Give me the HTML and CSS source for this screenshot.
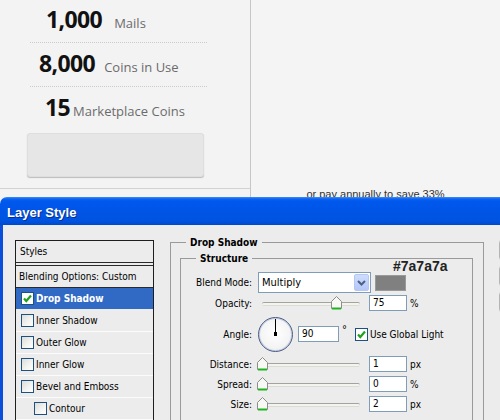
FILE: index.html
```html
<!DOCTYPE html>
<html>
<head>
<meta charset="utf-8">
<link rel="stylesheet" href="styles.css">
</head>
<body>
<div class="top">
  <div class="stats-panel">
    <div class="stats-box">
      <div class="stats">
        <div class="stat stat-mails"><span class="num">1,000</span><span class="lbl">Mails</span></div>
        <div class="stat stat-coins"><span class="num">8,000</span><span class="lbl">Coins in Use</span></div>
        <div class="stat stat-market"><span class="num">15</span><span class="lbl">Marketplace Coins</span></div>
      </div>
      <div class="cta"></div>
    </div>
  </div>
  <div class="pricing"><p class="annual">or pay annually to save 33%</p></div>
</div>

<div class="dialog">
  <div class="titlebar">Layer Style</div>
  <div class="dlg-body">
    <div class="styles-list">
      <div class="styles-head">Styles</div>
      <div class="blend-opts">Blending Options: Custom</div>
      <div class="style-item selected"><span class="cb checked"><svg width="11" height="11" viewBox="0 0 11 11"><path d="M2 5.5 L4.3 8 L9 2.5" fill="none" stroke="#21a121" stroke-width="2.2"/></svg></span>Drop Shadow</div>
      <div class="style-item"><span class="cb"></span>Inner Shadow</div>
      <div class="style-item"><span class="cb"></span>Outer Glow</div>
      <div class="style-item"><span class="cb"></span>Inner Glow</div>
      <div class="style-item"><span class="cb"></span>Bevel and Emboss</div>
      <div class="style-item sub"><span class="cb"></span>Contour</div>
    </div>

    <fieldset class="group outer">
      <legend>Drop Shadow</legend>
      <fieldset class="group inner">
        <legend>Structure</legend>

        <div class="row row-blend">
          <span class="label">Blend Mode:</span>
          <div class="select"><span class="select-text">Multiply</span><span class="select-btn"><svg width="9" height="6" viewBox="0 0 9 6"><path d="M1 1 L4.5 4.5 L8 1" fill="none" stroke="#4d6185" stroke-width="2"/></svg></span></div>
          <div class="swatch"><span class="hex">#7a7a7a</span></div>
        </div>

        <div class="row row-opacity">
          <span class="label">Opacity:</span>
          <div class="slider"><span class="track"></span><span class="thumb" style="left: 75%"><svg width="11" height="14" viewBox="0 0 11 14"><path d="M0.5 5.5 L5.5 0.5 L10.5 5.5 V12.5 H0.5 Z" fill="#f8f8f5" stroke="#8c8c8c"/><path d="M1 12.5 H10" stroke="#1fb51f" stroke-width="2"/></svg></span></div>
          <span class="field">75</span><span class="unit">%</span>
        </div>

        <div class="row row-angle">
          <span class="label">Angle:</span>
          <div class="dial"><span class="needle"></span><span class="hub"></span></div>
          <span class="field field-angle">90</span><span class="deg">°</span>
          <span class="cb checked global"><svg width="11" height="11" viewBox="0 0 11 11"><path d="M2 5.5 L4.3 8 L9 2.5" fill="none" stroke="#21a121" stroke-width="2.2"/></svg></span><span class="cb-text">Use Global Light</span>
        </div>

        <div class="row row-small">
          <span class="label">Distance:</span>
          <div class="slider"><span class="track"></span><span class="thumb" style="left: 0%"><svg width="11" height="14" viewBox="0 0 11 14"><path d="M0.5 5.5 L5.5 0.5 L10.5 5.5 V12.5 H0.5 Z" fill="#f8f8f5" stroke="#8c8c8c"/><path d="M1 12.5 H10" stroke="#1fb51f" stroke-width="2"/></svg></span></div>
          <span class="field">1</span><span class="unit">px</span>
        </div>

        <div class="row row-small">
          <span class="label">Spread:</span>
          <div class="slider"><span class="track"></span><span class="thumb" style="left: 0%"><svg width="11" height="14" viewBox="0 0 11 14"><path d="M0.5 5.5 L5.5 0.5 L10.5 5.5 V12.5 H0.5 Z" fill="#f8f8f5" stroke="#8c8c8c"/><path d="M1 12.5 H10" stroke="#1fb51f" stroke-width="2"/></svg></span></div>
          <span class="field">0</span><span class="unit">%</span>
        </div>

        <div class="row row-small">
          <span class="label">Size:</span>
          <div class="slider"><span class="track"></span><span class="thumb" style="left: 0%"><svg width="11" height="14" viewBox="0 0 11 14"><path d="M0.5 5.5 L5.5 0.5 L10.5 5.5 V12.5 H0.5 Z" fill="#f8f8f5" stroke="#8c8c8c"/><path d="M1 12.5 H10" stroke="#1fb51f" stroke-width="2"/></svg></span></div>
          <span class="field">2</span><span class="unit">px</span>
        </div>
      </fieldset>
    </fieldset>

    <div class="side-buttons">
      <span class="xp-btn"></span>
      <span class="xp-btn"></span>
      <span class="xp-btn"></span>
    </div>
  </div>
</div>
</body>
</html>
```

FILE: styles.css
```css
* { box-sizing: border-box; }

html, body {
  margin: 0;
  padding: 0;
}

body {
  width: 500px;
  height: 420px;
  overflow: hidden;
  background: #f3f3f3;
}

/* ---------- top web page ---------- */
.top {
  display: flex;
  height: 197px;
  overflow: hidden;
  background: #f3f3f3;
}

.stats-panel {
  width: 251px;
  height: 197px;
  border-right: 1px solid #c6c6c6;
  flex: none;
}

.stats-box {
  height: 189px;
  border-bottom: 1px solid #d2d2d2;
}

.stats {
  margin-left: 30px;
  width: 177px;
}

.stat {
  display: flex;
  align-items: baseline;
  height: 44px;
  padding-top: 9px;
  border-bottom: 1px dotted #cccccc;
  font-family: "Open Sans", sans-serif;
}

.stat-mails { height: 43px; padding-top: 8px; padding-left: 16px; }
.stat-coins { padding-left: 9px; }
.stat-market { padding-left: 15px; border-bottom: none; height: 45px; }

.num {
  font-size: 23px;
  font-weight: 700;
  line-height: 23px;
  color: #111;
  letter-spacing: -0.6px;
}

.lbl {
  font-size: 13px;
  color: #6b6b6b;
}

.stat-mails .lbl { margin-left: 12px; }
.stat-coins .lbl { margin-left: 9px; }
.stat-market .lbl { margin-left: 3px; }

.cta {
  margin: 1px 0 0 27px;
  width: 177px;
  height: 44px;
  background: #e6e6e6;
  border: 1px solid #dedede;
  border-radius: 3px;
  box-shadow: 0 1px 1px #bcbcbc;
}

.pricing {
  flex: 1;
  padding-top: 188px;
  background: #f4f4f4;
}

.annual {
  margin: 0;
  text-align: center;
  font-family: "Liberation Sans", Arial, sans-serif;
  font-size: 11px;
  line-height: 13px;
  color: #333;
}

/* ---------- XP dialog ---------- */
.dialog {
  height: 223px;
  font-family: "DejaVu Sans Condensed", "DejaVu Sans", sans-serif;
  font-stretch: condensed;
  font-size: 10px;
  color: #000;
}

.titlebar {
  height: 28px;
  padding: 3px 0 0 7px;
  line-height: 25px;
  border-radius: 7px 0 0 0;
  background: linear-gradient(#3a8cfb 0, #0d62ee 2px, #0058ee 4px, #0055e6 50%, #0053e0 85%, #0048cc 100%);
  color: #fff;
  font-family: "Liberation Sans", Arial, sans-serif;
  font-stretch: normal;
  font-weight: 700;
  font-size: 13px;
  text-shadow: 1px 1px 0 #0a2f8f;
}

.dlg-body {
  display: flex;
  align-items: flex-start;
  height: 195px;
  overflow: hidden;
  padding: 15px 0 0 12px;
  background: #ececec;
  border-left: 3px solid #0a4fdc;
}

/* styles list */
.styles-list {
  flex: none;
  width: 139px;
  height: 200px;
  border: 1px solid #1e1e1e;
  border-bottom: none;
  background: #ececec;
}

.styles-head {
  height: 22px;
  padding-left: 4px;
  line-height: 21px;
  border-bottom: 1px solid #2a2a2a;
  margin-bottom: 2px;
}

.blend-opts {
  height: 23px;
  padding-left: 3px;
  line-height: 21px;
  border-top: 1px solid #2a2a2a;
  border-bottom: 1px solid #2a2a2a;
}

.style-item {
  display: flex;
  align-items: center;
  gap: 2px;
  height: 22px;
  padding-left: 5px;
  border-bottom: 1px solid #fbfbfb;
}

.style-item.selected {
  background: #316ac5;
  color: #fff;
  font-weight: 700;
  border-bottom-color: #ececec;
}

.style-item.sub { padding-left: 18px; }

.cb {
  display: inline-flex;
  align-items: center;
  justify-content: center;
  width: 13px;
  height: 13px;
  flex: none;
  border: 1px solid #1c5180;
  background: linear-gradient(135deg, #dcdcd7 0%, #f4f4f2 60%, #ffffff 100%);
}

.cb.checked { background: #fff; }

/* fieldsets */
.group {
  margin: 0;
  border: 1px solid #9a9a9a;
  min-width: 0;
}

.group legend {
  font-weight: 700;
  line-height: 13px;
  padding: 0 4px;
}

.outer {
  flex: none;
  width: 314px;
  height: 220px;
  margin: -4px 0 0 16px;
  padding: 0 10px 0 9px;
}

.outer > legend { margin-left: 6px; }

.inner {
  width: 293px;
  height: 200px;
  margin-top: 3px;
  padding: 0;
}

.inner > legend { margin-left: 15px; }

.row {
  display: flex;
  align-items: center;
  position: relative;
}

.label {
  width: 71px;
  flex: none;
  text-align: right;
  margin-right: 6px;
}

.row-blend { height: 21px; margin-top: 7px; }
.row-opacity { height: 16px; margin-top: 2px; }
.row-angle { height: 36px; margin-top: 5px; }
.row-small { height: 16px; margin-top: 4px; }

.select {
  display: flex;
  align-items: center;
  width: 113px;
  height: 21px;
  padding: 2px 1px 2px 3px;
  background: #fff;
  border: 1px solid #7f9db9;
}

.select-text {
  flex: 1;
  font-size: 11px;
}

.select-btn {
  display: flex;
  align-items: center;
  justify-content: center;
  width: 15px;
  height: 17px;
  border: 1px solid #b4c8f6;
  border-radius: 2px;
  background: linear-gradient(#cfdcfc, #b4c7f8);
}

.swatch {
  position: relative;
  margin-left: 4px;
  width: 31px;
  height: 16px;
  background: #808080;
  border: 1px solid #9a9a9a;
}

.hex {
  position: absolute;
  left: 17px;
  top: -18px;
  font-family: "Liberation Sans", Arial, sans-serif;
  font-stretch: normal;
  font-weight: 700;
  font-size: 14px;
  line-height: 16px;
  color: #222;
  white-space: nowrap;
}

.slider {
  position: relative;
  width: 98px;
  height: 16px;
  margin-left: 4px;
  margin-right: 9px;
}

.track {
  position: absolute;
  left: 0;
  right: 0;
  top: 7px;
  height: 4px;
  border-radius: 2px;
  background: #f4f4ef;
  border-top: 1px solid #a3a3a0;
  border-bottom: 1px solid #dcdcd5;
}

.thumb {
  position: absolute;
  top: 1px;
  margin-left: -5px;
  width: 11px;
  height: 14px;
  line-height: 0;
}

.field {
  width: 38px;
  height: 16px;
  padding-left: 3px;
  line-height: 14px;
  background: #fff;
  border: 1px solid #7f9db9;
  flex: none;
}

.unit {
  margin-left: 3px;
}

.dial {
  position: relative;
  width: 35px;
  height: 35px;
  flex: none;
  border-radius: 50%;
  border: 1.5px solid #4a5b85;
  background: radial-gradient(circle at 50% 45%, #ffffff 0%, #f4f4f4 60%, #e2e2e2 100%);
  box-shadow: inset 0 0 0 1px #c3cce0;
  margin-right: 5px;
}

.needle {
  position: absolute;
  left: 15.5px;
  top: 1px;
  width: 1.5px;
  height: 15px;
  background: #000;
}

.hub {
  position: absolute;
  left: 14.5px;
  top: 14.5px;
  width: 3.5px;
  height: 3.5px;
  background: #000;
}

.field-angle { width: 41px; }

.deg {
  align-self: flex-start;
  margin: 7px 0 0 3px;
  font-size: 11px;
}

.cb.global { margin-left: 8px; }

.cb-text { margin-left: 2px; }

/* partly visible buttons on the right */
.side-buttons {
  display: flex;
  flex-direction: column;
  gap: 4px;
  margin: -1px 0 0 15px;
  flex: none;
}

.xp-btn {
  display: block;
  width: 70px;
  height: 22px;
  border: 1px solid #b4b4b4;
  border-radius: 4px;
  background: #f7f7f5;
}
```
